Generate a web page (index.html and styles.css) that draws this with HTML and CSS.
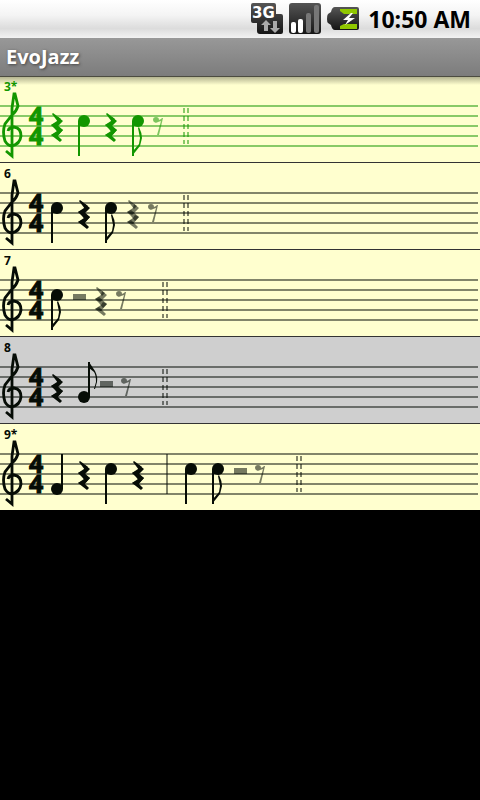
FILE: index.html
```
<!DOCTYPE html>
<html lang="en">

<head>
    <meta charset="UTF-8" />
    <meta name="viewport" content="width=device-width, initial-scale=1.0">
    <title>EvoJazz</title>
    <link rel="stylesheet" href="styles.css">
</head>

<body>
    <!-- shared music symbols, x = 0 is the centre of the note -->
    <svg class="symbols" width="0" height="0" aria-hidden="true">
        <defs>
            <g id="lines">
                <line x1="0" y1="14" x2="100%" y2="14" />
                <line x1="0" y1="24" x2="100%" y2="24" />
                <line x1="0" y1="34" x2="100%" y2="34" />
                <line x1="0" y1="44" x2="100%" y2="44" />
                <line x1="0" y1="54" x2="100%" y2="54" />
            </g>
            <g id="clef">
                <path d="M6 59 L12 64 V16 L14 2 H15 L18 14 Q16 20 12 23 L5 32 Q2 40 5 49 Q8 54 12 54 Q20 52 21 44 Q21 36 14 35 Q9 35 8 39" fill="none" stroke="currentColor" stroke-width="2.8" />
            </g>
            <g id="down">
                <circle cx="0" cy="29" r="6" />
                <rect x="-6" y="29" width="2" height="35" />
            </g>
            <g id="down8">
                <use href="#down" />
                <path d="M-6 64 L2 54 L4 46 Q4 41 1 35 L0 36 L2 46 L1 52 L-5 59 Z" />
            </g>
            <g id="up">
                <circle cx="0" cy="49" r="6" />
                <rect x="4" y="14" width="2" height="35" />
            </g>
            <g id="up8">
                <circle cx="0" cy="44" r="6" />
                <rect x="4" y="9" width="2" height="35" />
                <path d="M5 9 L11 18 Q14 24 13 29 L11 36 L10 36 L12 29 Q12 22 10 19 L5 15 Z" />
            </g>
            <g id="rest4">
                <path d="M-4 21 L4 27 L1 30 L-5 22 Z" />
                <path d="M1 25 L6 29 L-1 36 L-6 33 L0 29 Z" />
                <path d="M-6 33 L-2 31 L6 38 L2 42 L-2 37 Z" />
                <path d="M2 36 L6 38 L0 45 L-6 43 L0 39 Z" />
                <path d="M-6 43 L-2 41 L5 48 L3 50 Z" />
            </g>
            <g id="rest2">
                <rect x="-6" y="28" width="13" height="6" />
            </g>
            <g id="rest8">
                <path d="M-3 28 A3 3 0 0 1 3 28 L5 27 L6 26 H7 L3 43 H1 L5 29 L2 30 A3 3 0 0 1 -3 28 Z" />
            </g>
            <g id="end">
                <line x1="0" y1="16" x2="0" y2="52" />
                <line x1="4" y1="16" x2="4" y2="52" />
            </g>
        </defs>
    </svg>

    <header>
        <div class="status-bar">
            <svg class="icon" width="32" height="32" viewBox="0 0 32 32" role="img" aria-label="3G data">
                <defs>
                    <linearGradient id="dark" x1="0" y1="0" x2="0" y2="1">
                        <stop offset="0" stop-color="#555" />
                        <stop offset="1" stop-color="#151515" />
                    </linearGradient>
                </defs>
                <path d="M2 0 H23 Q25 0 25 2 V11 H30 Q32 11 32 13 V29 Q32 31 30 31 H9 Q6 31 6 28 V20 H2 Q0 20 0 18 V2 Q0 0 2 0 Z" fill="url(#dark)" />
                <text class="net" x="1" y="15">3G</text>
                <path d="M15 17 L20 22 H17 V28 H13 V22 H10 Z" fill="#aaa" />
                <path d="M24 30 L19 25 H22 V18 H26 V25 H29 Z" fill="#aaa" />
            </svg>
            <svg class="icon" width="32" height="32" viewBox="0 0 32 32" role="img" aria-label="Signal">
                <rect x="0" y="0" width="32" height="31" rx="3" fill="url(#dark)" />
                <rect x="2" y="19" width="5" height="11" rx="2" fill="#fff" />
                <rect x="9" y="16" width="5" height="14" rx="2" fill="#fff" />
                <rect x="17" y="10" width="5" height="20" rx="2" fill="#777" />
                <rect x="25" y="2" width="5" height="28" rx="2" fill="#777" />
            </svg>
            <svg class="icon" width="32" height="32" viewBox="0 0 32 32" role="img" aria-label="Battery charging">
                <path d="M8 4 H30 Q32 4 32 6 V25 Q32 27 30 27 H8 Q5 27 4 22 L1 20 Q0 19 0 16 Q0 12 1 11 L4 9 Q5 4 8 4 Z" fill="url(#dark)" />
                <path d="M13 6 H30 V11 H17 L13 8 Z M13 26 H30 V21 H17 L13 23 Z" fill="#90c800" />
                <path d="M24 10 L16 17 H21 L18 22 L28 15 H22 L26 10 Z" fill="#fff" />
            </svg>
            <time class="clock">10:50 AM</time>
        </div>
        <h1 class="title">EvoJazz</h1>
    </header>

    <ul class="phrases">
        <li class="phrase playing">
            <span class="number">3*</span>
            <svg class="staff" role="img" aria-label="Phrase 3">
                <use class="rule" href="#lines" />
                <use href="#clef" />
                <text class="meter" x="29" y="33">4</text>
                <text class="meter" x="29" y="53">4</text>
                <use href="#rest4" x="57" />
                <use href="#down" x="84" />
                <use href="#rest4" x="111" />
                <use href="#down8" x="138" />
                <use class="ghost" href="#rest8" x="156" />
                <use class="rule dashed" href="#end" x="184" />
            </svg>
        </li>
        <li class="phrase">
            <span class="number">6</span>
            <svg class="staff" role="img" aria-label="Phrase 6">
                <use class="rule" href="#lines" />
                <use href="#clef" />
                <text class="meter" x="29" y="33">4</text>
                <text class="meter" x="29" y="53">4</text>
                <use href="#down" x="57" />
                <use href="#rest4" x="84" />
                <use href="#down8" x="111" />
                <use class="ghost" href="#rest4" x="133" />
                <use class="ghost" href="#rest8" x="151" />
                <use class="rule dashed" href="#end" x="184" />
            </svg>
        </li>
        <li class="phrase">
            <span class="number">7</span>
            <svg class="staff" role="img" aria-label="Phrase 7">
                <use class="rule" href="#lines" />
                <use href="#clef" />
                <text class="meter" x="29" y="33">4</text>
                <text class="meter" x="29" y="53">4</text>
                <use href="#down8" x="57" />
                <use class="ghost" href="#rest2" x="79" />
                <use class="ghost" href="#rest4" x="101" />
                <use class="ghost" href="#rest8" x="119" />
                <use class="rule dashed" href="#end" x="163" />
            </svg>
        </li>
        <li class="phrase selected">
            <span class="number">8</span>
            <svg class="staff" role="img" aria-label="Phrase 8">
                <use class="rule" href="#lines" />
                <use href="#clef" />
                <text class="meter" x="29" y="33">4</text>
                <text class="meter" x="29" y="53">4</text>
                <use href="#rest4" x="57" />
                <use href="#up8" x="84" />
                <use class="ghost" href="#rest2" x="106" />
                <use class="ghost" href="#rest8" x="124" />
                <use class="rule dashed" href="#end" x="163" />
            </svg>
        </li>
        <li class="phrase">
            <span class="number">9*</span>
            <svg class="staff" role="img" aria-label="Phrase 9">
                <use class="rule" href="#lines" />
                <use href="#clef" />
                <text class="meter" x="29" y="33">4</text>
                <text class="meter" x="29" y="53">4</text>
                <use href="#up" x="57" />
                <use href="#rest4" x="84" />
                <use href="#down" x="111" />
                <use href="#rest4" x="138" />
                <line class="rule" x1="167" y1="14" x2="167" y2="54" />
                <use href="#down" x="191" />
                <use href="#down8" x="218" />
                <use class="ghost" href="#rest2" x="240" />
                <use class="ghost" href="#rest8" x="258" />
                <use class="rule dashed" href="#end" x="297" />
            </svg>
        </li>
    </ul>
</body>

</html>
```

FILE: styles.css
```
body {
    margin: 0;
    background: #000;
    font-family: "Open Sans", "Noto Sans", sans-serif;
    font-weight: bold;
}

.symbols {
    display: block;
}

.status-bar {
    display: flex;
    justify-content: flex-end;
    align-items: center;
    gap: 6px;
    height: 38px;
    padding-right: 9px;
    background: linear-gradient(#fff 0%, #f4f4f4 40%, #dcdcdc 75%, #f2f2f2 100%);
}

.net {
    font-family: "DejaVu Sans", sans-serif;
    font-size: 15px;
    fill: #fff;
}

.clock {
    margin-left: 3px;
    font-size: 23px;
    line-height: 38px;
    color: #000;
}

.title {
    margin: 0;
    padding: 0 6px;
    font-size: 20px;
    line-height: 38px;
    color: #fff;
    text-shadow: 1px 1px 3px #444;
    background: linear-gradient(#989898, #7c7c7c);
}

.phrases {
    margin: 0;
    padding: 0;
    list-style: none;
}

.phrase {
    padding-top: 6px;
    color: #060c06;
    background: #ffffcf;
    border-bottom: 1px solid #333;
}

.phrase:first-child {
    background: linear-gradient(#4c4c40 0, #4c4c40 1px, #b4b490 1px, #ffffcf 9px);
}

.phrase:last-child {
    border-bottom-color: #000;
}

.playing {
    color: #129600;
}

.selected {
    background: #cfcfcf;
}

.number {
    display: block;
    padding-left: 4px;
    font-size: 12px;
    line-height: 10px;
}

/* leaves the lines a little short of the right edge */
.staff {
    display: block;
    width: calc(100% - 2px);
    height: 70px;
    overflow: visible;
    fill: currentColor;
}

.rule {
    stroke: currentColor;
    stroke-width: 2px;
    stroke-opacity: 0.5;
}

.dashed {
    stroke-dasharray: 5 3;
}

.ghost {
    fill-opacity: 0.55;
}

.meter {
    font-size: 25px;
    stroke: currentColor;
    stroke-width: 1px;
}
```
